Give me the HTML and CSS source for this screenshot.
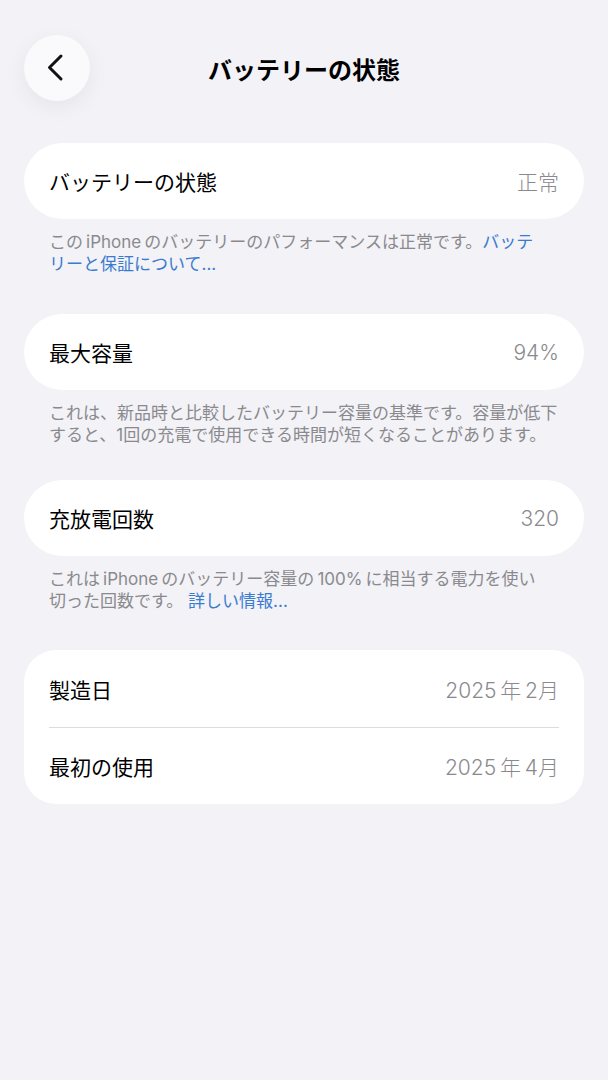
FILE: index.html
```html
<!DOCTYPE html>
<html lang="ja">
<head>
<meta charset="utf-8">
<title>バッテリーの状態</title>
<link rel="stylesheet" href="styles.css">
</head>
<body>
<div class="screen">
  <header class="nav">
    <button class="back" aria-label="戻る">
      <svg width="66" height="66" viewBox="0 0 66 66"><path d="M37 21 L25.5 32.5 L37 44" fill="none" stroke="#111" stroke-width="3" stroke-linecap="round" stroke-linejoin="round"/></svg>
    </button>
    <h1 class="title">バッテリーの状態</h1>
    <span class="spacer"></span>
  </header>

  <section class="group">
    <div class="card">
      <div class="row"><span class="label">バッテリーの状態</span><span class="value">正常</span></div>
    </div>
    <p class="footer">この&thinsp;iPhone&thinsp;のバッテリーのパフォーマンスは正常です。<a class="link">バッテ<br>リーと保証について...</a></p>
  </section>

  <section class="group group-tight">
    <div class="card">
      <div class="row"><span class="label">最大容量</span><span class="value">94%</span></div>
    </div>
    <p class="footer">これは、新品時と比較したバッテリー容量の基準です。容量が低下<br>すると、1回の充電で使用できる時間が短くなることがあります。</p>
  </section>

  <section class="group group-last-foot">
    <div class="card">
      <div class="row"><span class="label">充放電回数</span><span class="value">320</span></div>
    </div>
    <p class="footer">これは&thinsp;iPhone&thinsp;のバッテリー容量の&thinsp;100%&thinsp;に相当する電力を使い<br>切った回数です。 <a class="link">詳しい情報...</a></p>
  </section>

  <section class="group">
    <div class="card card-multi">
      <div class="row"><span class="label">製造日</span><span class="value">2025&thinsp;年&thinsp;2月</span></div>
      <div class="divider"></div>
      <div class="row"><span class="label">最初の使用</span><span class="value">2025&thinsp;年&thinsp;4月</span></div>
    </div>
  </section>
</div>
</body>
</html>
```

FILE: styles.css
```css
* { box-sizing: border-box; }

html, body {
  margin: 0;
  padding: 0;
  background: #f2f2f7;
}

body {
  font-family: "Inter", "Noto Sans CJK JP", sans-serif;
  color: #000;
  width: 608px;
  min-height: 1080px;
}

.screen {
  padding: 35px 24px 0;
}

.nav {
  display: grid;
  grid-template-columns: 66px 1fr 66px;
  align-items: center;
  height: 66px;
  margin-bottom: 42px;
}

.back {
  width: 66px;
  height: 66px;
  border-radius: 50%;
  border: none;
  padding: 0;
  background: #fafafc;
  box-shadow: 0 6px 22px rgba(0, 0, 0, 0.06);
  display: flex;
  align-items: center;
  justify-content: center;
}

.back svg { display: block; }

.title {
  margin: 0;
  text-align: center;
  font-size: 24px;
  font-weight: 700;
}

.group {
  margin-bottom: 39px;
}

.group-tight {
  margin-bottom: 34px;
}

.group-last-foot {
  margin-bottom: 38px;
}

.card {
  background: #fff;
  border-radius: 38px;
  padding: 0 25px;
}

.card-multi {
  border-radius: 32px;
}

.row {
  height: 76px;
  display: flex;
  align-items: center;
  justify-content: space-between;
  font-size: 21px;
}

.card-multi .row:first-child { height: 77px; }

.label { color: #000; }

.value {
  color: #8a8a8e;
  font-size: 21px;
  font-weight: 300;
}

.divider {
  height: 1px;
  background: #dcdce0;
}

.footer {
  margin: 0;
  padding: 12px 25px 0;
  font-size: 17px;
  line-height: 22px;
  color: #8a8a8e;
  white-space: nowrap;
}

.link {
  color: #3a7bd0;
}
```
